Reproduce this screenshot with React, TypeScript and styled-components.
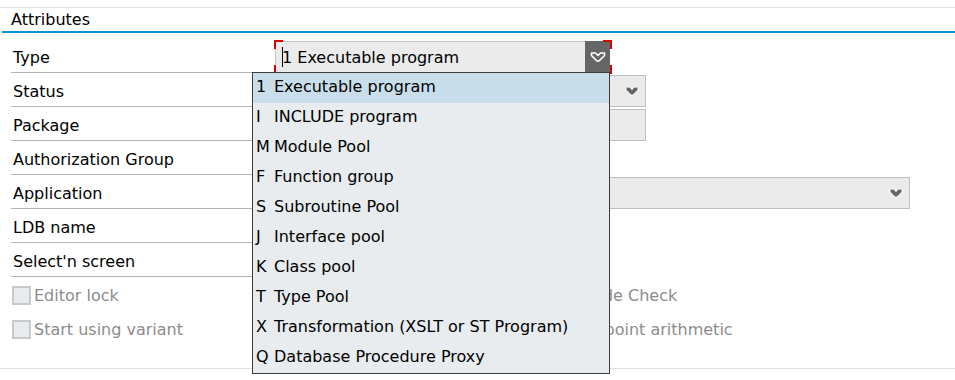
import React from 'react';
import styled, { createGlobalStyle } from 'styled-components';

const GlobalStyle = createGlobalStyle`
  html, body { margin: 0; padding: 0; background: #fff; }
  body {
    font-family: "DejaVu Sans", sans-serif;
    font-size: 16px;
    color: #000;
  }
`;

const Page = styled.div`
  position: relative;
  width: 955px;
  height: 380px;
  overflow: hidden;
  background: #fff;
`;

const TopRule = styled.div`
  height: 1px;
  margin-top: 7px;
  background: #e3e3e3;
`;

const SectionHeader = styled.div`
  height: 23px;
  line-height: 24px;
  margin-left: 2px;
  padding-left: 9px;
  border-bottom: 2px solid #0a93d6;
`;

const Form = styled.div`
  padding: 6px 0 0 11px;
`;

const Row = styled.div`
  display: grid;
  grid-template-columns: 264px auto;
  height: 34px;
  align-items: end;
`;

const Label = styled.div`
  box-sizing: border-box;
  height: 34px;
  padding: 3px 0 0 2px;
  display: flex;
  align-items: center;
  border-bottom: 1px solid #b4b4b4;
`;

const Field = styled.div<{ $w: number }>`
  position: relative;
  box-sizing: border-box;
  width: ${p => p.$w}px;
  height: 32px;
  display: flex;
  align-items: center;
  justify-content: flex-end;
  padding-right: 6px;
  background: #ebebeb;
  border: 1px solid #bfbfbf;
`;

const TypeBox = styled.div`
  position: relative;
  box-sizing: border-box;
  width: 335px;
  height: 32px;
  display: flex;
  background: #ebebeb;
  border: 1px solid #c4c4c4;
  border-right: none;
`;

const TypeValue = styled.div`
  flex: 1;
  display: flex;
  align-items: center;
  padding-left: 6px;
`;

const Caret = styled.span`
  display: inline-block;
  width: 1px;
  height: 20px;
  margin-right: -1px;
  background: #000;
`;

const DropButton = styled.div`
  width: 25px;
  margin-top: -1px;
  margin-bottom: -1px;
  background: #666;
  display: flex;
  align-items: center;
  justify-content: center;
`;

const Corner = styled.span<{ $v: 'top' | 'bottom'; $h: 'left' | 'right' }>`
  position: absolute;
  width: 7px;
  height: 7px;
  ${p => p.$v}: -2px;
  ${p => p.$h}: -2px;
  border-${p => p.$v}: 2px solid #e00000;
  border-${p => p.$h}: 2px solid #e00000;
`;

const Checks = styled.div`
  display: grid;
  grid-template-columns: 524px auto;
  grid-auto-rows: 34px;
  padding: 1px 0 0 12px;
  height: 68px;
`;

const CheckItem = styled.div`
  display: flex;
  align-items: center;
  gap: 3px;
  color: #8c8c8c;
`;

const Box = styled.span`
  box-sizing: border-box;
  width: 19px;
  height: 19px;
  background: #e8ebee;
  border: 2px solid #c9c9c9;
`;

const BottomRule = styled.div`
  height: 1px;
  margin-top: 22px;
  background: #e0e0e0;
`;

const List = styled.div`
  position: absolute;
  left: 252px;
  top: 72px;
  width: 356px;
  height: 300px;
  background: #e8ecef;
  border: 1px solid #3c3c3c;
`;

const Item = styled.div<{ $active?: boolean }>`
  box-sizing: border-box;
  display: grid;
  grid-template-columns: 18px 1fr;
  height: 30px;
  align-items: center;
  padding: 0 0 3px 3px;
  background: ${p => (p.$active ? '#c8dfeb' : 'transparent')};
`;

const Chevron = ({ outline }: { outline?: boolean }) =>
  outline ? (
    <svg width="16" height="12" viewBox="0 0 16 12">
      <polygon
        points="1.5,2 5.5,2 8,4.5 10.5,2 14.5,2 14.5,4.5 9,10 7,10 1.5,4.5"
        fill="none"
        stroke="#fff"
        strokeWidth="1.6"
        strokeLinejoin="round"
      />
    </svg>
  ) : (
    <svg width="14" height="11" viewBox="0 0 14 11">
      <polygon
        points="1.5,1.5 4.5,1.5 7,4 9.5,1.5 12.5,1.5 12.5,4 8,8.5 6,8.5 1.5,4"
        fill="#666"
        stroke="#fff"
        strokeWidth="1.5"
        strokeLinejoin="round"
        paintOrder="stroke"
      />
    </svg>
  );

const rows: { label: string; w?: number; chevron?: boolean }[] = [
  { label: 'Status', w: 371, chevron: true },
  { label: 'Package', w: 371 },
  { label: 'Authorization Group', w: 300 },
  { label: 'Application', w: 635, chevron: true },
  { label: 'LDB name', w: 300 },
  { label: "Select'n screen", w: 300 },
];

const options = [
  ['1', 'Executable program'],
  ['I', 'INCLUDE program'],
  ['M', 'Module Pool'],
  ['F', 'Function group'],
  ['S', 'Subroutine Pool'],
  ['J', 'Interface pool'],
  ['K', 'Class pool'],
  ['T', 'Type Pool'],
  ['X', 'Transformation (XSLT or ST Program)'],
  ['Q', 'Database Procedure Proxy'],
];

export default function App() {
  return (
    <Page>
      <GlobalStyle />
      <TopRule />
      <SectionHeader>Attributes</SectionHeader>
      <Form>
        <Row>
          <Label>Type</Label>
          <TypeBox>
            <TypeValue>
              <Caret />1 Executable program
            </TypeValue>
            <DropButton>
              <Chevron outline />
            </DropButton>
            <Corner $v="top" $h="left" />
            <Corner $v="top" $h="right" />
            <Corner $v="bottom" $h="left" />
            <Corner $v="bottom" $h="right" />
          </TypeBox>
        </Row>
        {rows.map(r => (
          <Row key={r.label}>
            <Label>{r.label}</Label>
            <Field $w={r.w ?? 300}>{r.chevron && <Chevron />}</Field>
          </Row>
        ))}
      </Form>
      <Checks>
        <CheckItem>
          <Box />
          Editor lock
        </CheckItem>
        <CheckItem>
          <Box />
          Unicode Check
        </CheckItem>
        <CheckItem>
          <Box />
          Start using variant
        </CheckItem>
        <CheckItem>
          <Box />
          Fixed point arithmetic
        </CheckItem>
      </Checks>
      <BottomRule />
      <List>
        {options.map(([k, t], i) => (
          <Item key={k} $active={i === 0}>
            <span>{k}</span>
            <span>{t}</span>
          </Item>
        ))}
      </List>
    </Page>
  );
}
